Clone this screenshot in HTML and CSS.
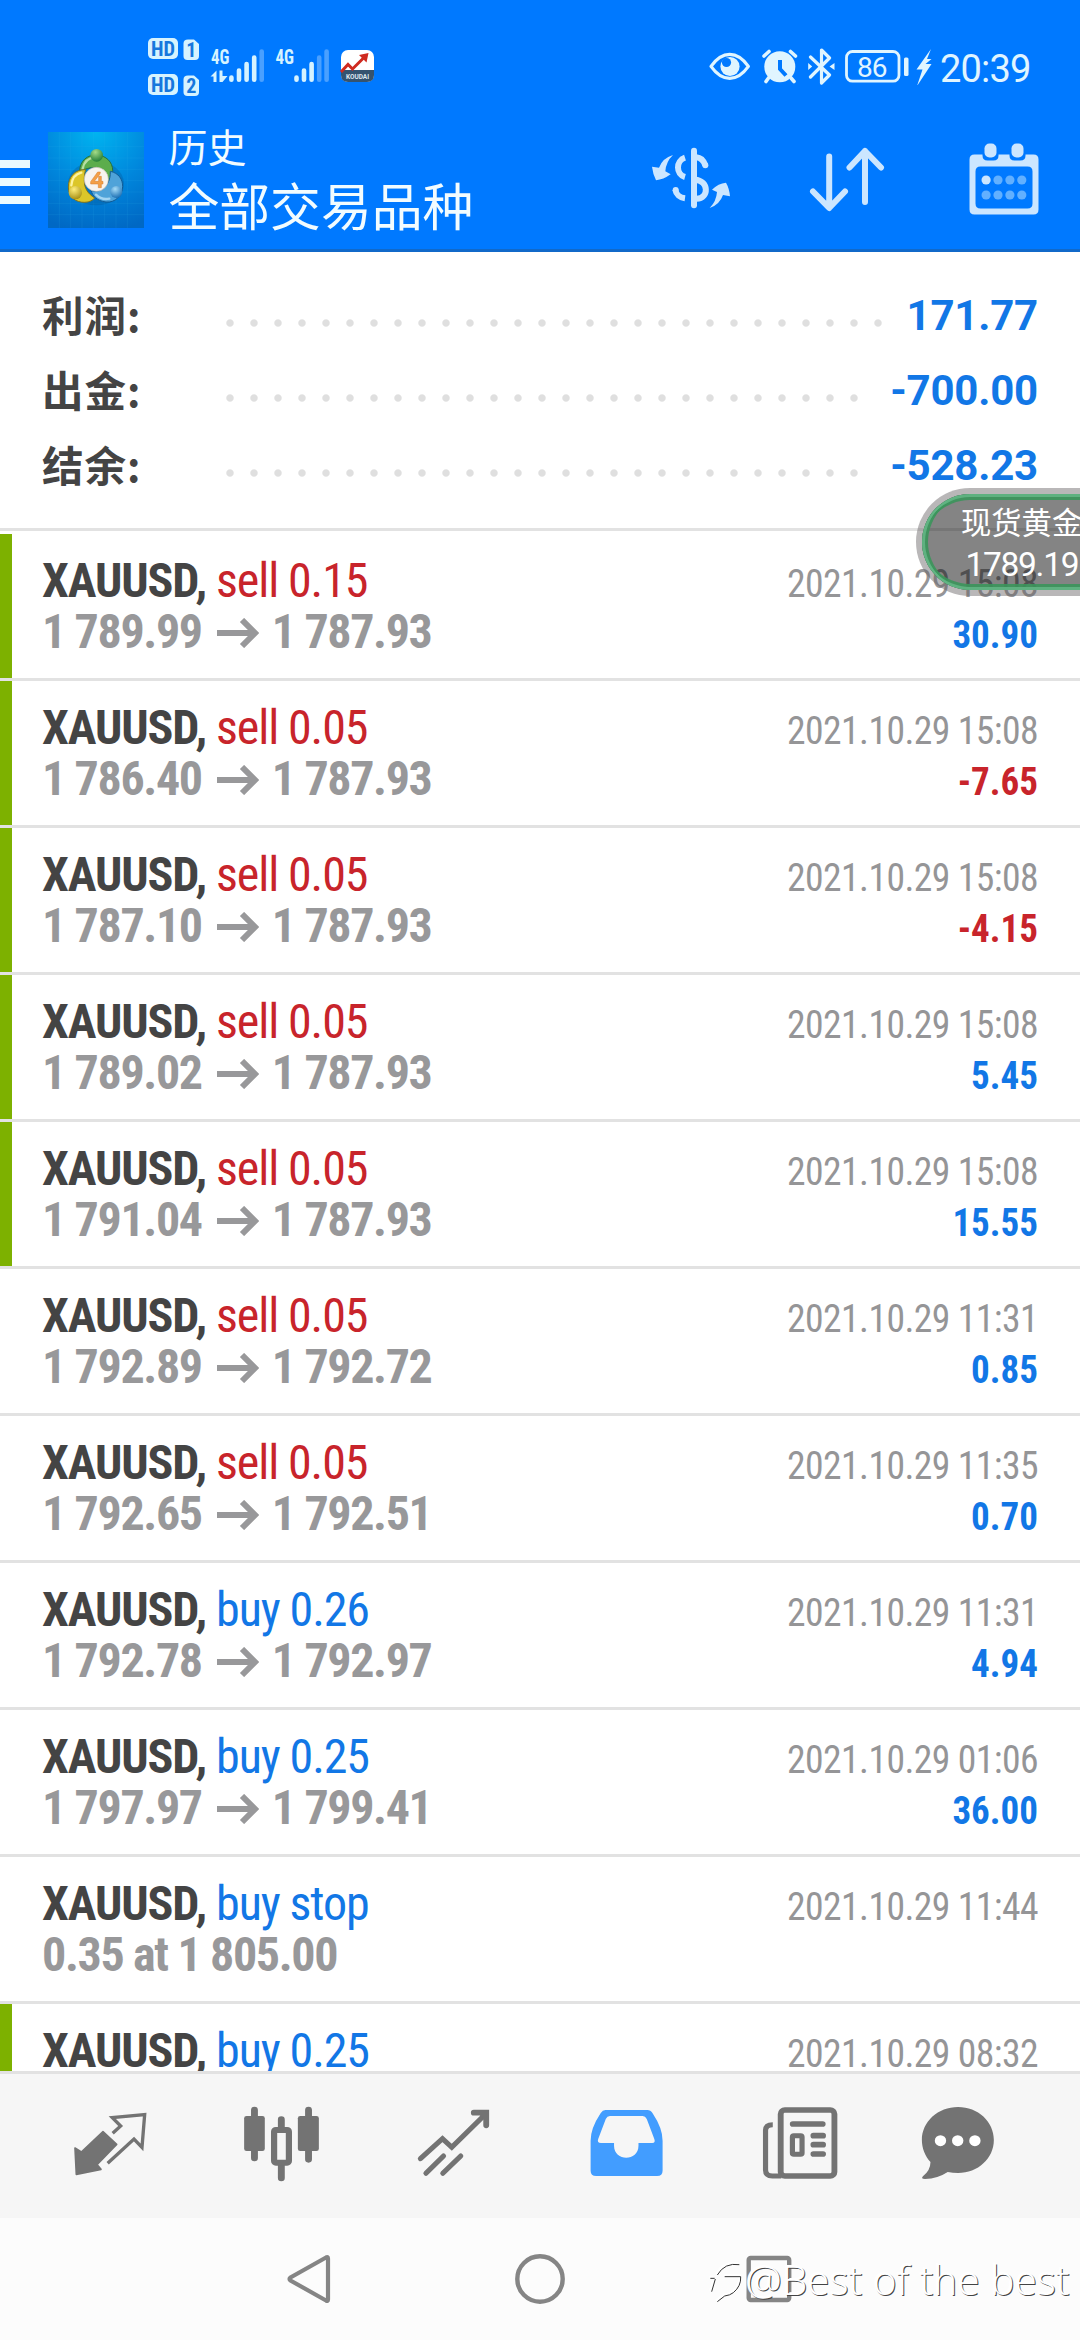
FILE: index.html
```html
<!DOCTYPE html>
<html lang="zh-CN">
<head>
<meta charset="utf-8">
<title>历史</title>
<link rel="stylesheet" href="styles.css">
</head>
<body>
<header class="top">
  <div class="status">
    <svg class="status-left" width="230" height="64" viewBox="147 35 230 64">
      <g fill="#d6f3ff">
        <rect x="148" y="38" width="30" height="21" rx="5"/>
        <path d="M188 39.5h6l5 4.500v12q0 4-4 4h-7.500q-4 0-4-4v-12.500q0-4 4.500-4z"/>
        <rect x="148" y="74" width="30" height="21" rx="5"/>
        <path d="M188 75.500h6l5 4.500v12q0 4-4 4h-7.500q-4 0-4-4v-12.500q0-4 4.500-4z"/>
      </g>
      <g class="badge-text" fill="#1677dd">
        <text x="163" y="55.500" textLength="24" lengthAdjust="spacingAndGlyphs">HD</text>
        <text x="191.300" y="56.500">1</text>
        <text x="163" y="91.500" textLength="24" lengthAdjust="spacingAndGlyphs">HD</text>
        <text x="191.300" y="92.500">2</text>
      </g>
      <g class="net-text" fill="#d6f3ff">
        <text x="211" y="64" textLength="18.500" lengthAdjust="spacingAndGlyphs">4G</text>
        <text x="275.500" y="64" textLength="18.500" lengthAdjust="spacingAndGlyphs">4G</text>
      </g>
      <path d="M210.500 76.500l6-6v11.500h-3v-5.500zM219.500 70.500h3v5.500h5l-5 6h-3z" fill="#d6f3ff"/>
      <g stroke="#d6f3ff" stroke-width="4.600" stroke-linecap="round">
        <path d="M231.400 77.500v2.200M239 70.500v9.200M246.600 64v15.700M254.200 57.500v22.200M296.500 77.500v2.200M304 70.500v9.200M311.600 64v15.700"/>
        <path d="M261.700 51.500v28.200M319.200 57.500v22.200M326.600 51.500v28.200" stroke="#4aa0ff"/>
      </g>
      <rect x="341" y="50" width="33" height="32" rx="7" fill="#fff"/>
      <path d="M341 70h33v5q0 7-7 7h-19q-7 0-7-7z" fill="#35536f"/>
      <path d="M341 72l7-7.500 4.500 4.500 11-11" fill="none" stroke="#cf2a20" stroke-width="3"/>
      <path d="M359 55l9.500-2-2 9.500z" fill="#cf2a20"/>
      <text class="tiny" x="357.500" y="79" fill="#dfe8ef">KOUDAI</text>
    </svg>
    <div class="status-right">
      <svg width="42" height="38" viewBox="708.500 47 42 38">
        <path d="M710.500 66.300q8.500-12 18.700-12t18.700 12q-8.500 12-18.700 12t-18.700-12z" fill="none" stroke="#e0f5ff" stroke-width="3.200" stroke-linejoin="round"/>
        <circle cx="729.500" cy="66.500" r="9.600" fill="#e0f5ff"/>
        <circle cx="726" cy="62.500" r="4.600" fill="#0079ff"/>
      </svg>
      <svg class="alarm" width="36" height="38" viewBox="761.500 47 36 38">
        <circle cx="779.300" cy="66.800" r="15.500" fill="#e0f5ff"/>
        <path d="M763.500 56l5-4.500M795 56l-5-4.500M768 78l-2.500 3.500M790.500 78l3 3.500" stroke="#e0f5ff" stroke-width="3.600" stroke-linecap="round"/>
        <path d="M779.500 60v9l6 6.500" fill="none" stroke="#0079ff" stroke-width="4"/>
      </svg>
      <svg class="bt" width="27" height="38" viewBox="808 47 27 38">
        <path d="M810.500 57l19 18-8 8v-33l8 8-19 19" fill="none" stroke="#e0f5ff" stroke-width="3.200" stroke-linejoin="round" stroke-linecap="round"/>
        <path d="M808.200 63v7l4-3.500zM834.500 63v7l-5-3.500z" fill="#e0f5ff"/>
      </svg>
      <svg class="battery" width="88" height="38" viewBox="845 47 88 38">
        <rect x="846.500" y="51.500" width="52.500" height="29.700" rx="6" fill="none" stroke="#e0f5ff" stroke-width="2.800"/>
        <rect x="904" y="57.500" width="4.500" height="18.500" rx="1.500" fill="#e0f5ff"/>
        <text class="level" x="871.800" y="77" fill="#e0f5ff">86</text>
        <path d="M931 49l-14.500 20.500h6l-5.500 16.500 14.500-22h-6l6-5h-4.500z" fill="#e0f5ff"/>
      </svg>
      <span class="clock">20:39</span>
    </div>
  </div>
  <div class="bar">
    <div class="burger"><i></i><i></i><i></i></div>
    <svg class="logo" width="96" height="96" viewBox="24 6 288 288">
      <defs>
        <radialGradient id="bg" cx=".5" cy="0" r="1.050"><stop offset="0" stop-color="#00b4f0"/><stop offset=".55" stop-color="#0086dc"/><stop offset="1" stop-color="#0068c4"/></radialGradient>
        <radialGradient id="gr" cx=".4" cy=".25" r=".8"><stop offset="0" stop-color="#a5dc88"/><stop offset="1" stop-color="#1d7a33"/></radialGradient>
        <radialGradient id="ye" cx=".4" cy=".25" r=".8"><stop offset="0" stop-color="#ffee7c"/><stop offset="1" stop-color="#a38b10"/></radialGradient>
        <radialGradient id="bl" cx=".4" cy=".25" r=".8"><stop offset="0" stop-color="#a5dcf8"/><stop offset="1" stop-color="#1469b0"/></radialGradient>
      </defs>
      <rect x="24" y="6" width="288" height="288" fill="url(#bg)"/>
      <path d="M58 6v288M92 6v288M126 6v288M160 6v288M194 6v288M228 6v288M262 6v288M24 50h288M24 84h288M24 118h288M24 152h288M24 186h288M24 220h288M24 254h288" stroke="#35b5ee" stroke-opacity=".25" stroke-width="1.500"/>
      <ellipse cx="168" cy="160" rx="84" ry="66" fill="#02508f" opacity=".3"/>
      <path d="M119 124c0-32 24-50 50-49 30 1 49 22 49 46 0 17-4 27-12 34-2-24-17-40-38-42-20-2-33 5-49 11z" fill="#5cad4c" stroke="#276f3c" stroke-width="3"/>
      <path d="M128 116c4-20 18-33 38-34" fill="none" stroke="#b6dfa2" stroke-width="7" stroke-linecap="round"/>
      <path d="M137 119c-34-2-52 24-52 52 0 30 23 47 49 46 15 0 25-7 30-13-20-13-31-28-31-51 0-14 0-23 4-34z" fill="#dcc629" stroke="#80731f" stroke-width="3"/>
      <path d="M94 166c2-20 12-34 30-38" fill="none" stroke="#fdf3a0" stroke-width="7" stroke-linecap="round"/>
      <path d="M211 124c25 5 37 24 37 45 0 28-23 50-50 47-28-3-42-20-44-34 20 5 38-3 48-20 8-14 9-25 9-38z" fill="#4fa3d9" stroke="#125c96" stroke-width="3"/>
      <path d="M168 194c12 12 26 15 40 12" fill="none" stroke="#a3d5f2" stroke-width="7" stroke-linecap="round"/>
      <circle cx="169" cy="148" r="36" fill="#f7f4ef" stroke="#c8c4bb" stroke-width="2"/>
      <circle cx="170" cy="76" r="19" fill="url(#gr)"/>
      <circle cx="106" cy="188" r="20" fill="url(#ye)"/>
      <circle cx="229" cy="186" r="18" fill="url(#bl)"/>
      <path d="M181 126h-8l-21 29v7h23v11h9v-11h5v-8h-5v-15h-8v15h-13l17-22z" fill="#f4a047" stroke="#d57a28" stroke-width="1.500"/>
    </svg>
    <div class="titles">
      <div class="sub">历史</div>
      <div class="main">全部交易品种</div>
    </div>
    <div class="actions">
      <svg width="80" height="76" viewBox="33 45 240 228" fill="#cce6ff">
        <path d="M159 62v164" stroke="#cce6ff" stroke-width="18" stroke-linecap="round"/>
        <path d="M96 75q-31 9-42 38l-21-3q3 24 12 41 22-2 44-18l-16-9q2-29 23-49zM206 234q30-10 40-39l21 4q-2-24-12-41-23 2-42 21l15 7q-2 28-22 48z"/>
        <path d="M132 83c-28 9-28 50 0 58M103 179c2 14 14 24 29 26M166 82c12 1 22 10 27 24M162 149c42 2 43 57 5 57" fill="none" stroke="#cce6ff" stroke-width="18"/>
        <circle cx="193" cy="106" r="9"/><circle cx="104" cy="180" r="9"/>
      </svg>
      <svg class="sort" width="76" height="66" viewBox="808 147 76 66" fill="none" stroke="#cce6ff" stroke-width="6" stroke-linecap="round" stroke-linejoin="round">
        <path d="M828.200 156.500v51M812 191.500l16.200 16.500 15.800-16.500M864 202v-51M848.500 167.500l15.500-16.500 16 16.500"/>
      </svg>
      <svg class="calendar" width="70" height="72" viewBox="967.500 142.500 70 72">
        <path fill-rule="evenodd" fill="#cce6ff" d="M973 154h8v1q0 5 5 5h6q5 0 5-5v-1h11v1q0 5 5 5h6q5 0 5-5v-1h8q5 0 5 5v50q0 5-5 5h-59q-5 0-5-5v-50q0-5 5-5zM979 166q-5 0-5 5v32q0 5 5 5h47q5 0 5-5v-32q0-5-5-5z"/>
        <rect x="983" y="143" width="12" height="14" rx="5" fill="#cce6ff"/>
        <rect x="1010" y="143" width="12" height="14" rx="5" fill="#cce6ff"/>
        <circle cx="984.600" cy="179.500" r="4.600" fill="#cce6ff"/>
        <g fill="#62b0ff"><circle cx="996.500" cy="179.500" r="4.600"/><circle cx="1008.400" cy="179.500" r="4.600"/><circle cx="1020.300" cy="179.500" r="4.600"/><circle cx="984.600" cy="194.500" r="4.600"/><circle cx="996.500" cy="194.500" r="4.600"/><circle cx="1008.400" cy="194.500" r="4.600"/><circle cx="1020.300" cy="194.500" r="4.600"/></g>
      </svg>
    </div>
  </div>
</header>

<section class="summary">
  <div class="sum-row"><span class="label">利润:</span><span class="dots long"></span><span class="value">171.77</span></div>
  <div class="sum-row"><span class="label">出金:</span><span class="dots"></span><span class="value">-700.00</span></div>
  <div class="sum-row"><span class="label">结余:</span><span class="dots"></span><span class="value">-528.23</span></div>
</section>

<main class="deals">
  <div class="deal tagged"><div class="left"><div class="name"><b>XAUUSD,</b> <span class="sell">sell 0.15</span></div><div class="price"><span>1 789.99</span><svg class="arrow" viewBox="0 0 42 30"><path d="M0 15h38M25 2l13 13-13 13"/></svg><span>1 787.93</span></div></div><div class="right"><div class="date">2021.10.29 15:08</div><div class="profit">30.90</div></div></div>
  <div class="deal tagged"><div class="left"><div class="name"><b>XAUUSD,</b> <span class="sell">sell 0.05</span></div><div class="price"><span>1 786.40</span><svg class="arrow" viewBox="0 0 42 30"><path d="M0 15h38M25 2l13 13-13 13"/></svg><span>1 787.93</span></div></div><div class="right"><div class="date">2021.10.29 15:08</div><div class="profit loss">-7.65</div></div></div>
  <div class="deal tagged"><div class="left"><div class="name"><b>XAUUSD,</b> <span class="sell">sell 0.05</span></div><div class="price"><span>1 787.10</span><svg class="arrow" viewBox="0 0 42 30"><path d="M0 15h38M25 2l13 13-13 13"/></svg><span>1 787.93</span></div></div><div class="right"><div class="date">2021.10.29 15:08</div><div class="profit loss">-4.15</div></div></div>
  <div class="deal tagged"><div class="left"><div class="name"><b>XAUUSD,</b> <span class="sell">sell 0.05</span></div><div class="price"><span>1 789.02</span><svg class="arrow" viewBox="0 0 42 30"><path d="M0 15h38M25 2l13 13-13 13"/></svg><span>1 787.93</span></div></div><div class="right"><div class="date">2021.10.29 15:08</div><div class="profit">5.45</div></div></div>
  <div class="deal tagged"><div class="left"><div class="name"><b>XAUUSD,</b> <span class="sell">sell 0.05</span></div><div class="price"><span>1 791.04</span><svg class="arrow" viewBox="0 0 42 30"><path d="M0 15h38M25 2l13 13-13 13"/></svg><span>1 787.93</span></div></div><div class="right"><div class="date">2021.10.29 15:08</div><div class="profit">15.55</div></div></div>
  <div class="deal"><div class="left"><div class="name"><b>XAUUSD,</b> <span class="sell">sell 0.05</span></div><div class="price"><span>1 792.89</span><svg class="arrow" viewBox="0 0 42 30"><path d="M0 15h38M25 2l13 13-13 13"/></svg><span>1 792.72</span></div></div><div class="right"><div class="date">2021.10.29 11:31</div><div class="profit">0.85</div></div></div>
  <div class="deal"><div class="left"><div class="name"><b>XAUUSD,</b> <span class="sell">sell 0.05</span></div><div class="price"><span>1 792.65</span><svg class="arrow" viewBox="0 0 42 30"><path d="M0 15h38M25 2l13 13-13 13"/></svg><span>1 792.51</span></div></div><div class="right"><div class="date">2021.10.29 11:35</div><div class="profit">0.70</div></div></div>
  <div class="deal"><div class="left"><div class="name"><b>XAUUSD,</b> <span class="buy">buy 0.26</span></div><div class="price"><span>1 792.78</span><svg class="arrow" viewBox="0 0 42 30"><path d="M0 15h38M25 2l13 13-13 13"/></svg><span>1 792.97</span></div></div><div class="right"><div class="date">2021.10.29 11:31</div><div class="profit">4.94</div></div></div>
  <div class="deal"><div class="left"><div class="name"><b>XAUUSD,</b> <span class="buy">buy 0.25</span></div><div class="price"><span>1 797.97</span><svg class="arrow" viewBox="0 0 42 30"><path d="M0 15h38M25 2l13 13-13 13"/></svg><span>1 799.41</span></div></div><div class="right"><div class="date">2021.10.29 01:06</div><div class="profit">36.00</div></div></div>
  <div class="deal"><div class="left"><div class="name"><b>XAUUSD,</b> <span class="buy">buy stop</span></div><div class="price"><span>0.35 at 1 805.00</span></div></div><div class="right"><div class="date">2021.10.29 11:44</div></div></div>
  <div class="deal tagged"><div class="left"><div class="name"><b>XAUUSD,</b> <span class="buy">buy 0.25</span></div></div><div class="right"><div class="date">2021.10.29 08:32</div></div></div>
</main>

<nav class="tabs">
  <svg viewBox="69.700 282 499.500 432" preserveAspectRatio="none">
    <g transform="translate(145.200 360) scale(.968 1)">
      <path d="M75 144l19 12 65-61 41 38-59 61 12 14-74 15z" fill="#737373" stroke="#737373" stroke-width="5" stroke-linejoin="round"/>
      <path d="M188 100l24-22-25-25 97-9-8 98-24-25-79 73" fill="none" stroke="#737373" stroke-width="10"/>
    </g>
  </svg>
  <svg viewBox="569.200 282 499.500 432" preserveAspectRatio="none">
    <path d="M739 390v144M896 390v148M817 419v26M817 556v38" stroke="#737373" stroke-width="20" stroke-linecap="round"/>
    <rect x="709" y="408" width="60" height="105" rx="7" fill="#737373"/>
    <rect x="865" y="408" width="61" height="105" rx="7" fill="#737373"/>
    <rect x="796" y="450" width="43" height="98" rx="5" fill="#f6f6f6" stroke="#737373" stroke-width="18"/>
  </svg>
  <svg viewBox="1068.700 282 499.500 432" preserveAspectRatio="none" fill="none" stroke="#737373" stroke-width="15" stroke-linecap="round">
    <path d="M1221 536l64-60 27 26 96-98"/>
    <path d="M1376 398h36v38" stroke-width="17"/>
    <path d="M1380 390h40v46l-14-16z" fill="#737373" stroke="none"/>
    <path d="M1237 580l51-52M1286 580l52-52"/>
  </svg>
  <svg viewBox="0 282 499.500 432" preserveAspectRatio="none">
    <path fill="#429dff" fill-rule="evenodd" d="M190 390h122q9 0 15 10 29 45 29 82v90q0 16-16 16h-177q-16 0-16-16v-90q0-37 29-82 6-10 14-10zM203 408q-8 0-12 9l-22 60q-4 12 8 12h38v8c0 48 71 48 71 0v-8h40q10 0 6-12l-22-60q-4-9-12-9z"/>
  </svg>
  <svg viewBox="499.500 282 499.500 432" preserveAspectRatio="none" fill="none" stroke="#737373">
    <rect x="699" y="390" width="156" height="198" rx="12" stroke-width="17"/>
    <path d="M676 434q-21 0-21 17v119q0 18 20 18h26" stroke-width="15"/>
    <path d="M734 432h87M794 467h28M794 494h28M794 522h28" stroke-width="17" stroke-linecap="round"/>
    <rect x="733" y="467" width="28" height="56" rx="4" stroke-width="15"/>
  </svg>
  <svg viewBox="999 282 499.500 432" preserveAspectRatio="none">
    <path fill="#737373" d="M1214 381c58 0 104 44 104 99s-46 99-104 99q-15 0-30-3-29 20-66 21-13 0-6-8 22-18 22-43c-16-18-25-41-25-66 0-55 47-99 105-99z"/>
    <g fill="#fff"><circle cx="1163" cy="482" r="16.500"/><circle cx="1213" cy="482" r="16.500"/><circle cx="1263" cy="482" r="16.500"/></g>
  </svg>
</nav>

<footer class="system">
  <svg width="50" height="50" viewBox="285 2254 50 50"><path d="M326 2257.500q2-1 2 1v41q0 2-2 1l-35.500-20q-2-1.500 0-3z" fill="none" stroke="#858585" stroke-width="4.200"/></svg>
  <svg width="50" height="50" viewBox="0 0 50 50"><circle cx="25" cy="25" r="22.700" fill="none" stroke="#858585" stroke-width="4.400"/></svg>
  <svg width="50" height="50" viewBox="745 2254 50 50"><rect x="748.700" y="2258" width="40.500" height="42" rx="2" fill="none" stroke="#858585" stroke-width="4.400"/></svg>
</footer>

<div class="quote"><div class="quote-name">现货黄金</div><div class="quote-price">1789.19</div></div>

<div class="watermark">
  <svg width="36" height="46" viewBox="55 65 108 138" fill="none">
    <path d="M72 117h-13M80 107q22-38 66-31M63 157l11-38M102 112h48q2 28-22 48-10 8-26 10l-22 17" stroke="#fff" stroke-width="9"/>
    <path d="M75 120h-13M83 110q22-38 66-31M66 160l11-38M105 115h48q2 28-22 48-10 8-26 10l-22 17" stroke="#333" stroke-width="3"/>
  </svg><span>@Best of the best</span>
</div>
</body>
</html>
```
FILE: styles.css
```css
* { box-sizing: border-box; }
body {
  margin: 0;
  width: 1080px;
  height: 2340px;
  position: relative;
  overflow: hidden;
  display: flex;
  flex-direction: column;
  background: #fff;
  font-family: Roboto, "Noto Sans CJK SC", sans-serif;
}
svg { display: block; flex: none; }

.top { height: 252px; flex: none; background: #0079ff; border-bottom: 3px solid #1169c9; }
.status { height: 99px; padding: 35px 0 0 147px; display: flex; }
.status-right { display: flex; margin: 12px 0 0 331.5px; height: 38px; }
.alarm { margin-left: 11px; }
.bt { margin-left: 10.5px; }
.battery { margin-left: 10px; }
.clock {
  margin-left: 7px;
  color: #e0f5ff;
  font-size: 38px;
  line-height: 44px;
  letter-spacing: -0.8px;
}
.badge-text { font: 700 20px "Roboto Condensed", sans-serif; text-anchor: middle; }
.net-text { font: 700 21px "Roboto Condensed", sans-serif; }
.tiny { font: 700 6.500px Roboto, sans-serif; text-anchor: middle; }
.level { font: 400 28px Roboto, sans-serif; text-anchor: middle; letter-spacing: -1px; }

.bar { display: flex; align-items: flex-start; height: 150px; }
.burger { width: 30px; margin-top: 61px; display: flex; flex-direction: column; gap: 10px; }
.burger i { height: 8px; background: #eafaff; }
.logo { margin: 33px 0 0 18px; }
.titles {
  margin: 24px 0 0 24.5px;
  width: 320px;
  color: #f2fcff;
  font-family: "Noto Sans CJK SC", sans-serif;
}
.sub { font-size: 39px; line-height: 44px; }
.main { font-size: 50.8px; line-height: 64px; white-space: nowrap; margin-top: 5px; }
.actions { display: flex; margin: 46px 0 0 163.5px; }
.sort { margin: 2px 0 0 77px; }
.calendar { margin: -2.500px 0 0 83.500px; }

.summary {
  height: 279px;
  flex: none;
  padding-top: 26px;
  border-bottom: 3px solid #e2e2e2;
}
.sum-row { display: flex; height: 75px; padding: 0 42px; }
.label {
  width: 176px;
  color: #444;
  font: 700 41.500px/73px "Noto Sans CJK SC", sans-serif;
  letter-spacing: 1px;
}
.dots {
  width: 648px;
  height: 8px;
  margin-top: 41px;
  background: radial-gradient(circle at 12px 4px, #dfdfdf 3.200px, transparent 4.200px) 0 0 / 24px 8px repeat-x;
}
.dots.long { width: 672px; }
.value { margin-left: auto; color: #1277e6; font-size: 42px; font-weight: 700; line-height: 75px; letter-spacing: -0.2px; }

.deals { height: 1540px; flex: none; padding-top: 3px; overflow: hidden; font-family: "Roboto Condensed", sans-serif; }
.deal {
  height: 147px;
  border-bottom: 3px solid #e2e2e2;
  padding: 21px 42px 0;
  display: flex;
  justify-content: space-between;
}
.tagged { box-shadow: inset 12px 0 0 #7db100; }
.name, .price { font-size: 48px; line-height: 51px; letter-spacing: -1.1px; white-space: nowrap; }
.name { color: #444; }
.sell { color: #c8242b; }
.buy { color: #1277e6; }
.price { color: #98989a; font-weight: 700; display: flex; letter-spacing: -1.35px; }
.arrow { width: 42px; height: 30px; margin: 12px 13px 0 15px; fill: none; stroke: #98989a; stroke-width: 6; }
.right { padding-top: 4px; text-align: right; font-size: 39px; line-height: 51px; }
.date { color: #959597; letter-spacing: -0.6px; transform: scaleX(.965); transform-origin: right; }
.profit { color: #1277e6; font-weight: 700; transform: scaleX(.95); transform-origin: right; }
.profit.loss { color: #c8242b; }

.tabs {
  height: 147px;
  flex: none;
  display: flex;
  padding-left: 24px;
  background: #f6f6f6;
  border-top: 3px solid #e2e2e2;
}
.tabs svg { width: 172px; height: 144px; }
.system { flex: 1; display: flex; justify-content: center; gap: 180px; padding-top: 36px; background: #fcfcfc; }

.quote {
  position: absolute;
  left: 916px;
  top: 488px;
  width: 164px;
  height: 108px;
  border-radius: 54px 0 0 54px;
  border: solid rgba(100, 95, 98, .45);
  border-width: 6px 0 6px 6px;
  box-shadow: inset 3px 0 0 0 rgba(99, 181, 132, .9), inset 0 3px 0 0 rgba(99, 181, 132, .9), inset 0 -3px 0 0 rgba(99, 181, 132, .9), inset 6px 0 0 0 rgba(60, 150, 92, .9), inset 0 6px 0 0 rgba(60, 150, 92, .9), inset 0 -6px 0 0 rgba(60, 150, 92, .9);
  background: rgba(10, 10, 10, .5);
  background-clip: padding-box;
  color: #fff;
  overflow: hidden;
  white-space: nowrap;
}
.quote-name { margin: 9px 0 0 39px; font: 400 30.300px/36px "Noto Sans CJK SC", sans-serif; }
.quote-price { margin: 4px 0 0 43.500px; font-size: 33.500px; line-height: 44px; letter-spacing: -1.300px; }

.watermark {
  position: absolute;
  left: 708px;
  top: 2260px;
  display: flex;
  color: #fff;
  font: 300 40.300px/40px "Open Sans", sans-serif;
  white-space: nowrap;
  text-shadow: 1px 1px 0 #444, -1px -1px 0 #fff;
}
.watermark span { margin-left: 2px; letter-spacing: 0.2px; }
```
